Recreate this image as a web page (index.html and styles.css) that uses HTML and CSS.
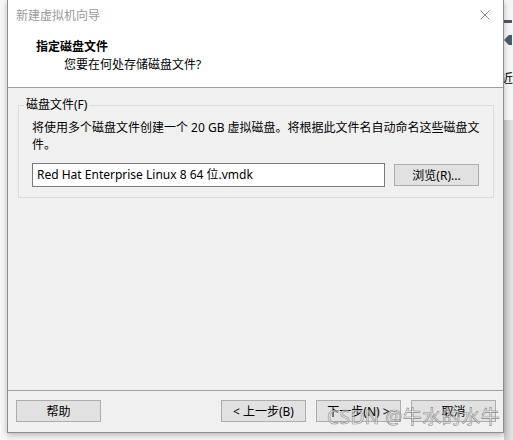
FILE: index.html
```html
<!DOCTYPE html>
<html>
<head>
  <title>新建虚拟机向导</title>
  <link rel="stylesheet" href="styles.css">
</head>
<body>
  <div class="desk">
    <div class="gutter"></div>
    <div class="window">
      <div class="titlebar">
        <span class="title">新建虚拟机向导</span>
        <svg class="close" width="10" height="10" viewBox="0 0 10 10">
          <path d="M0.5 0.5 L9.5 9.5 M9.5 0.5 L0.5 9.5" stroke="#8a8a8a" stroke-width="1" fill="none"/>
        </svg>
      </div>
      <div class="header">
        <div class="head-title">指定磁盘文件</div>
        <div class="head-sub">您要在何处存储磁盘文件?</div>
      </div>
      <div class="content">
        <fieldset class="group">
          <legend>磁盘文件(F)</legend>
          <p class="desc">将使用多个磁盘文件创建一个 20 GB 虚拟磁盘。将根据此文件名自动命名这些磁盘文件。</p>
          <div class="file-row">
            <div class="file-input">Red Hat Enterprise Linux 8 64 位.vmdk</div>
            <button class="btn browse">浏览(R)...</button>
          </div>
        </fieldset>
      </div>
      <div class="footer">
        <button class="btn">帮助</button>
        <div class="nav">
          <button class="btn">&lt; 上一步(B)</button>
          <button class="btn">下一步(N) &gt;</button>
          <button class="btn">取消</button>
        </div>
      </div>
      <div class="watermark">CSDN @牛水的水牛</div>
    </div>
    <div class="behind">
      <div class="behind-top">
        <span class="icon-bar"></span>
        <span class="icon-diamond"></span>
        <span class="behind-text">近</span>
      </div>
      <div class="behind-bottom"></div>
    </div>
  </div>
</body>
</html>
```

FILE: styles.css
```css
body {
  margin: 0;
  font-family: "Noto Sans", "Noto Sans CJK SC", sans-serif;
  font-size: 12px;
  color: #000;
  background-color: #f4f4f4;
}

.desk {
  display: flex;
  height: 440px;
  overflow: hidden;
}

.gutter {
  width: 7px;
  background-color: #f7f7f7;
}

.window {
  position: relative;
  width: 496px;
  height: 432px;
  display: flex;
  flex-direction: column;
  background-color: #f0f0f0;
  border: 1px solid #8c8c8c;
  border-top: none;
  box-shadow: 0 2px 6px rgba(0, 0, 0, 0.25);
}

.titlebar {
  height: 30px;
  display: flex;
  align-items: center;
  justify-content: space-between;
  padding: 0 13px 0 8px;
  background-color: #fff;
}

.title {
  color: #999;
}

.header {
  height: 57px;
  background-color: #fff;
  border-bottom: 1px solid #a0a0a0;
  padding-left: 28px;
}

.head-title {
  font-weight: bold;
  line-height: 18px;
  padding-top: 8px;
}

.head-sub {
  padding-left: 28px;
  line-height: 18px;
}

.content {
  flex: 1;
  padding: 9px 9px 0 10px;
}

.group {
  margin: 0;
  padding: 6px 14px 10px 13px;
  border: 1px solid #dcdcdc;
}

.group legend {
  padding: 0 2px;
  margin-left: -8px;
  line-height: 16px;
}

.desc {
  margin: 0 -14px 0 0;
  line-height: 17px;
}

.file-row {
  display: flex;
  align-items: center;
  gap: 9px;
  margin-top: 10px;
}

.file-input {
  flex: 1;
  height: 22px;
  line-height: 22px;
  padding-left: 4px;
  background-color: #fff;
  border: 1px solid #7a7a7a;
}

.btn {
  width: 85px;
  height: 22px;
  padding: 0;
  font-family: inherit;
  font-size: 12px;
  color: #000;
  background-color: #e1e1e1;
  border: 1px solid #adadad;
}

.footer {
  display: flex;
  justify-content: space-between;
  padding: 9px 7px 10px 8px;
  border-top: 1px solid #a0a0a0;
}

.nav {
  display: flex;
  gap: 10px;
}

.watermark {
  position: absolute;
  left: 319px;
  bottom: 2px;
  font-size: 19px;
  color: rgba(255, 255, 255, 0.55);
  -webkit-text-stroke: 0.6px rgba(110, 110, 110, 0.8);
  letter-spacing: 0.5px;
}

.behind {
  flex: 1;
  display: flex;
  flex-direction: column;
}

.behind-top {
  height: 100px;
  display: flex;
  flex-direction: column;
  gap: 12px;
  padding-top: 20px;
  background-color: #f6f6f6;
}

.icon-bar {
  width: 8px;
  height: 3px;
  background-color: #4b5a68;
}

.icon-diamond {
  width: 8px;
  height: 10px;
  background-color: #4b5a68;
  clip-path: polygon(60% 0, 100% 0, 100% 100%, 60% 100%, 0 50%);
}

.behind-text {
  font-family: "Noto Sans CJK SC", sans-serif;
  margin-left: -3px;
  margin-top: 12px;
}

.behind-bottom {
  flex: 1;
  background: linear-gradient(to right, #c8c8c8, #e6e6e6);
}
```
